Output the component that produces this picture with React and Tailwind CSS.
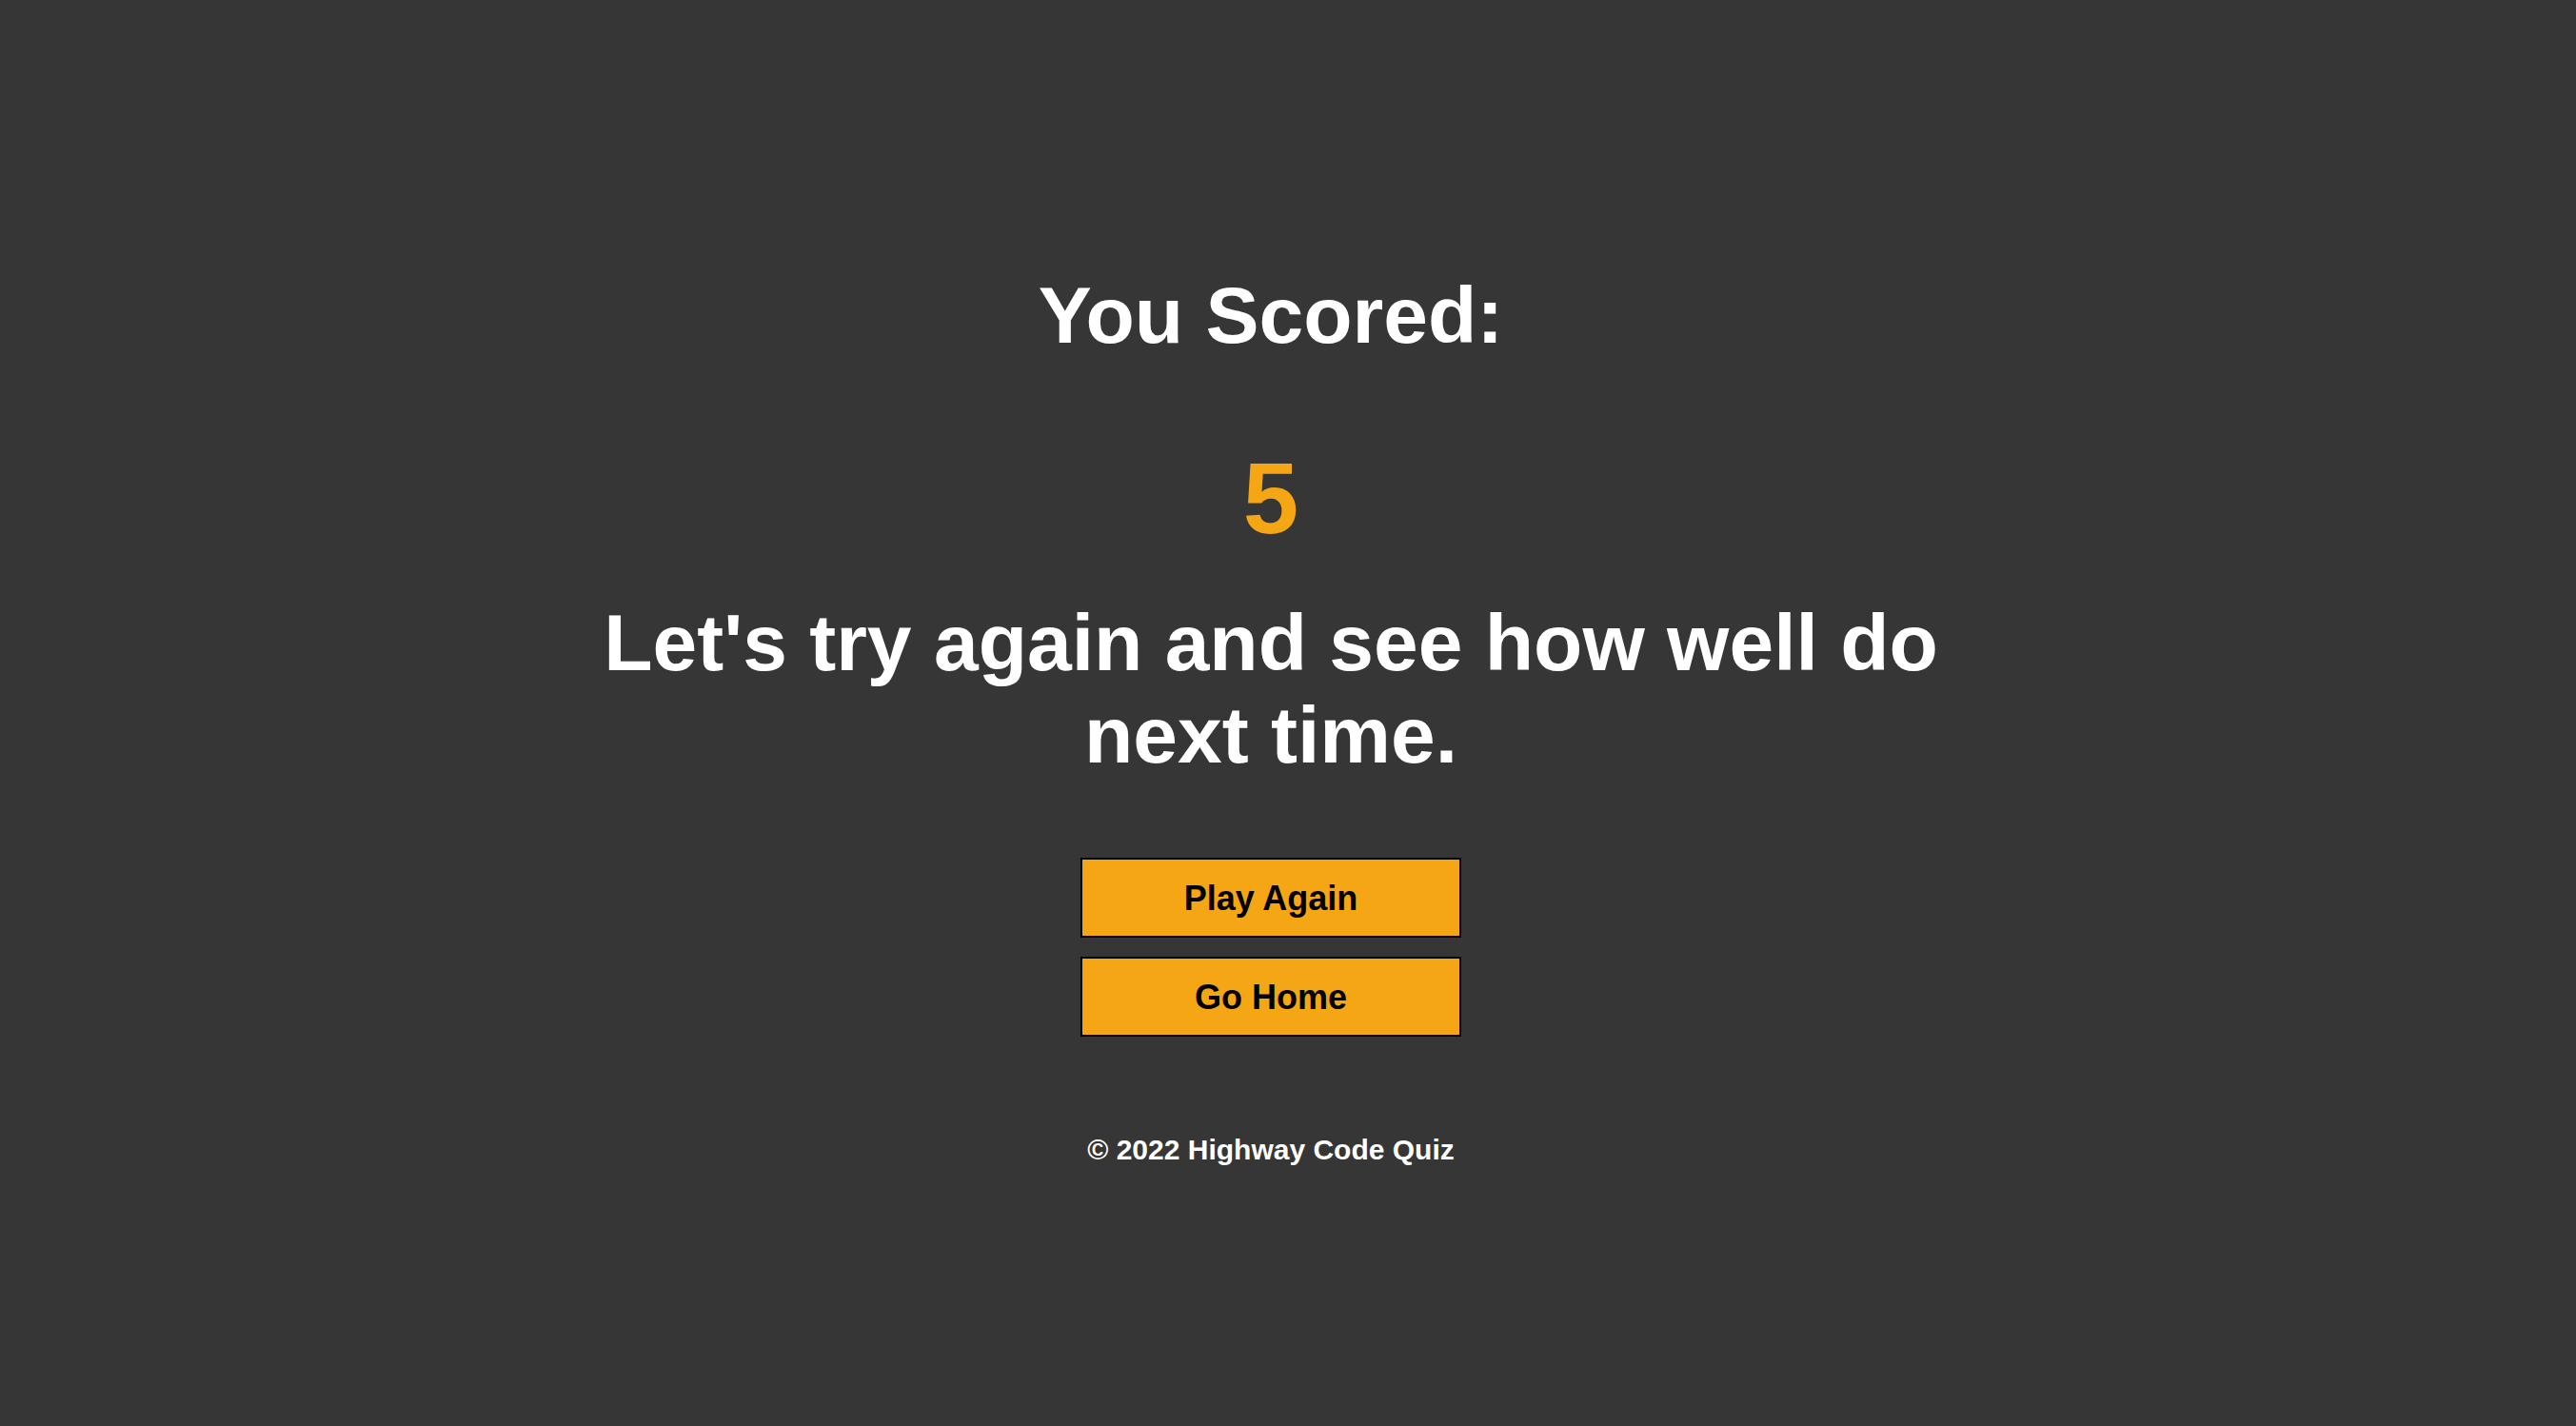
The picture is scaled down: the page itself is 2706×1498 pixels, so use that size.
export default function App() {
  return (
    <div
      className="min-h-screen w-full bg-[#363636] flex flex-col items-center pr-[36px]"
      style={{ fontFamily: '"Liberation Sans", Arial, Helvetica, sans-serif' }}
    >
      <h1 className="mt-[283px] text-[84px] leading-[97px] font-bold text-white text-center">
        You Scored:
      </h1>
      <div className="mt-[83px] text-[105px] leading-[121px] font-bold text-[#f4a614] text-center">
        5
      </div>
      <p className="mt-[43px] max-w-[1450px] text-[84px] leading-[97px] font-bold text-white text-center">
        Let's try again and see how well do next time.
      </p>
      <div className="mt-[80px] flex flex-col gap-[20px]">
        <button className="w-[400px] h-[84px] pt-[2px] bg-[#f4a614] border-2 border-black text-black text-[36px] font-bold">
          Play Again
        </button>
        <button className="w-[400px] h-[84px] pt-[2px] bg-[#f4a614] border-2 border-black text-black text-[36px] font-bold">
          Go Home
        </button>
      </div>
      <footer className="mt-[102px] text-[30px] leading-[34px] font-bold text-white text-center">
        © 2022 Highway Code Quiz
      </footer>
    </div>
  );
}
